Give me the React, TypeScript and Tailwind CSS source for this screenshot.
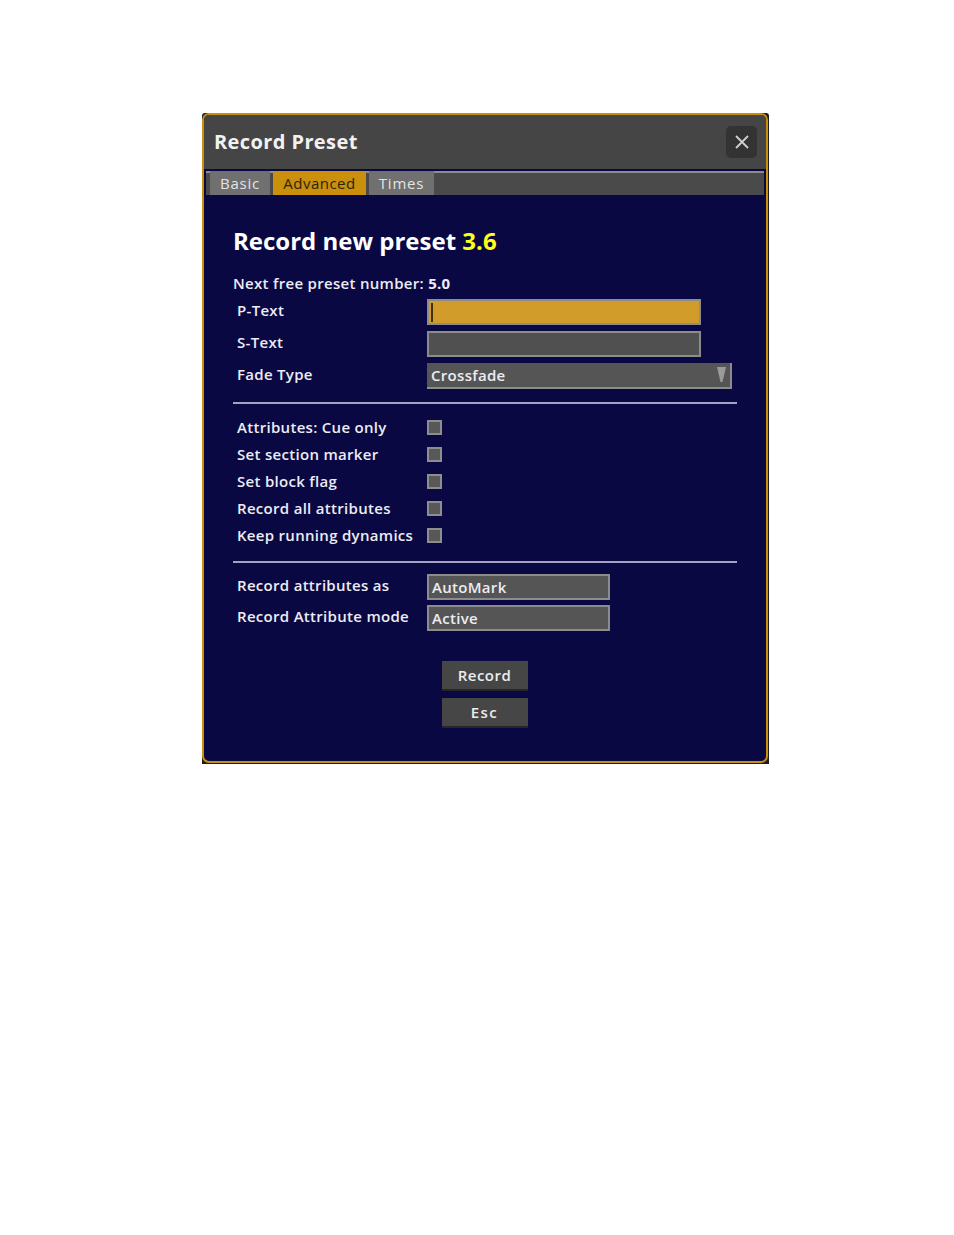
import React from "react"

const font = { fontFamily: '"Open Sans", "Liberation Sans", sans-serif' }

function Checkbox() {
  return <div className="w-[15px] h-[15px] bg-[#585858] border-2 border-[#8e8e8e]" />
}

function Row({ label, children }: { label: string; children: React.ReactNode }) {
  return (
    <div className="flex items-center">
      <div className="w-[194px] pl-[4px] pb-[3px] text-[15px] font-semibold tracking-[0.3px] text-[#ececf4]">{label}</div>
      {children}
    </div>
  )
}

export default function App() {
  const checks = [
    "Attributes: Cue only",
    "Set section marker",
    "Set block flag",
    "Record all attributes",
    "Keep running dynamics",
  ]

  return (
    <div className="w-[954px] h-[1235px] bg-white" style={font}>
      <div className="ml-[202px] pt-[112px]">
        <div className="w-[567px] h-[651px] bg-[#1c1c1c] rounded-t-[3px]">
          <div className="w-[566px] h-[650px] mt-[1px] border-2 border-[#c8900e] rounded-[7px] bg-[#0a0842] flex flex-col overflow-hidden">
            {/* Header */}
            <div className="h-[54px] bg-[#454545] flex items-center justify-between pl-[10px] pr-[9px] shrink-0">
              <span className="text-[20px] font-bold text-[#f2f2f2] tracking-[0.4px]">Record Preset</span>
              <button className="w-[31px] h-[32px] rounded-[5px] bg-[#333333] flex items-center justify-center">
                <svg width="16" height="16" viewBox="0 0 16 16">
                  <path d="M2 2 L14 14 M14 2 L2 14" stroke="#cfcfcf" strokeWidth="1.8" />
                </svg>
              </button>
            </div>

            {/* Tabs */}
            <div className="pt-[2px] px-[2px] shrink-0">
              <div className="h-[24px] bg-[#4a4a4a] border-t-2 border-[#8c8c8c] flex gap-[3px] pl-[4px]">
                <div className="-mt-[2px] h-[24px] w-[60px] bg-[#707070] text-[#e4e4e4] text-[15px] tracking-[0.8px] flex items-center justify-center">Basic</div>
                <div className="-mt-[2px] h-[24px] w-[93px] bg-[#c98f0d] text-[#2e2406] text-[15px] tracking-[0.5px] flex items-center justify-center">Advanced</div>
                <div className="-mt-[2px] h-[24px] w-[65px] bg-[#707070] text-[#e4e4e4] text-[15px] tracking-[0.8px] flex items-center justify-center">Times</div>
              </div>
            </div>

            {/* Body */}
            <div className="pl-[29px] pr-[29px] pt-[30px] flex flex-col">
              <div className="text-[24px] leading-[32px] font-bold text-white">
                Record new preset <span className="text-[#ffff1a]">3.6</span>
              </div>
              <div className="mt-[16px] text-[15px] leading-[20px] font-semibold tracking-[0.3px] text-[#ececf4]">
                Next free preset number: <span className="font-bold">5.0</span>
              </div>

              <div className="mt-[6px] flex flex-col gap-[6px]">
                <Row label="P-Text">
                  <div className="w-[274px] h-[26px] bg-[#d19c29] border-2 border-[#8c8c8c] flex items-center pl-[2px]">
                    <div className="w-[2px] h-[19px] bg-[#3d300c]" />
                  </div>
                </Row>
                <Row label="S-Text">
                  <div className="w-[274px] h-[26px] bg-[#505050] border-2 border-[#8c8c8c]" />
                </Row>
                <Row label="Fade Type">
                  <div className="w-[305px] h-[26px] bg-[#555555] border-r-2 border-b-2 border-[#8c8c8c] flex items-center justify-between pl-[4px] pr-[4px]">
                    <span className="text-[15px] font-semibold tracking-[0.3px] text-[#ececf4]">Crossfade</span>
                    <svg width="9" height="16" viewBox="0 0 9 16">
                      <path d="M0 0 L9 0 L5.5 15 L3.5 15 Z" fill="#9a9a9a" />
                    </svg>
                  </div>
                </Row>
              </div>

              <div className="mt-[13px] h-[2px] bg-[#a3a2c2]" />

              <div className="mt-[10px] flex flex-col">
                {checks.map((c) => (
                  <div key={c} className="h-[27px] flex items-center">
                    <div className="w-[194px] pl-[4px] text-[15px] font-semibold tracking-[0.3px] text-[#ececf4] whitespace-nowrap">{c}</div>
                    <Checkbox />
                  </div>
                ))}
              </div>

              <div className="mt-[12px] h-[2px] bg-[#a3a2c2]" />

              <div className="mt-[11px] flex flex-col gap-[5px]">
                <Row label="Record attributes as">
                  <div className="w-[183px] h-[26px] bg-[#555555] border-2 border-[#8c8c8c] flex items-center pl-[3px] text-[15px] font-semibold tracking-[0.3px] text-[#ececf4]">AutoMark</div>
                </Row>
                <Row label="Record Attribute mode">
                  <div className="w-[183px] h-[26px] bg-[#555555] border-2 border-[#8c8c8c] flex items-center pl-[3px] text-[15px] font-semibold tracking-[0.3px] text-[#ececf4]">Active</div>
                </Row>
              </div>

              <div className="mt-[30px] flex flex-col items-center gap-[7px] pr-[1px]">
                <button className="w-[86px] h-[30px] bg-[#464646] border-b-2 border-[#262626] text-[15px] font-semibold tracking-[0.5px] text-[#ececec]">Record</button>
                <button className="w-[86px] h-[30px] bg-[#464646] border-b-2 border-[#262626] text-[15px] font-semibold tracking-[1.5px] text-[#ececec]">Esc</button>
              </div>
            </div>
          </div>
        </div>
      </div>
    </div>
  )
}
